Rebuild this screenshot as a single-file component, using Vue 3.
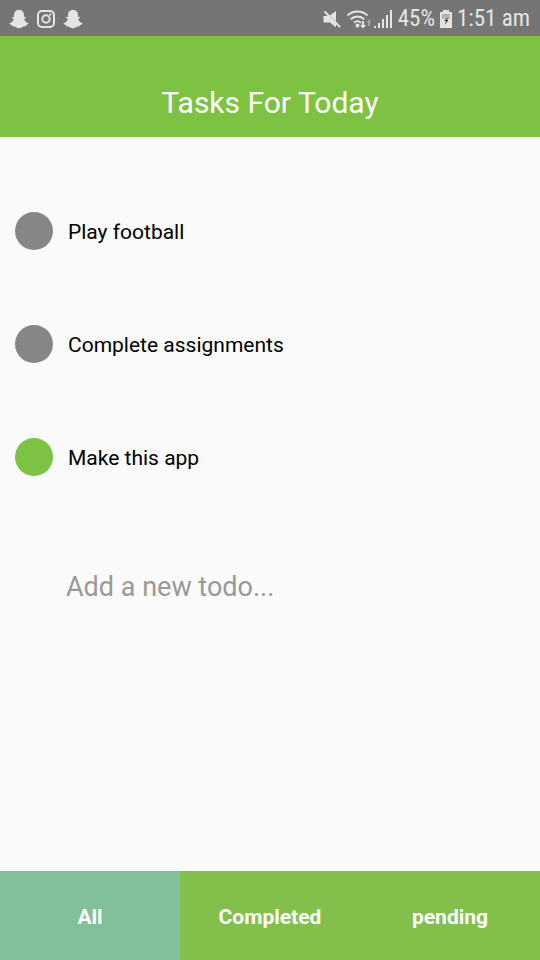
<script setup>
import { computed, ref } from 'vue'

const todos = ref([
  { id: 1, text: 'Play football', done: false },
  { id: 2, text: 'Complete assignments', done: false },
  { id: 3, text: 'Make this app', done: true },
])
const filters = ['All', 'Completed', 'pending']
const active = ref('All')
const draft = ref('')

const visible = computed(() =>
  todos.value.filter((t) => {
    if (active.value === 'Completed') return t.done
    if (active.value === 'pending') return !t.done
    return true
  })
)

function addTodo() {
  const text = draft.value.trim()
  if (!text) return
  todos.value.push({ id: Date.now(), text, done: false })
  draft.value = ''
}
</script>

<template>
  <div class="app">
    <div class="status">
      <div class="notifications">
        <svg class="ghost" viewBox="0 0 20 20">
          <path d="M10 1C7 1 5 3 5 6v2L3.400 7.800c-.8.600.1 1.700 1.400 2.300C4.300 12 3 13.400.6 14.200c-.3 1 1 1.400 2.200 1.700l.5 1.500c1.300-.2 2.500-.1 3.500.8 1.900 1.300 4.500 1.300 6.400 0 1-.9 2.200-1 3.500-.8l.5-1.500c1.200-.3 2.500-.7 2.200-1.700-2.400-.8-3.700-2.200-4.200-4.100 1.300-.6 2.200-1.700 1.400-2.300L15 8V6c0-3-2-5-5-5z" />
        </svg>
        <svg class="insta" viewBox="0 0 18 18">
          <rect x="1" y="1" width="16" height="16" rx="4" />
          <circle cx="9" cy="9" r="3.700" />
          <circle class="dot" cx="13.300" cy="4.700" r="1.100" />
        </svg>
        <svg class="ghost" viewBox="0 0 20 20">
          <path d="M10 1C7 1 5 3 5 6v2L3.400 7.800c-.8.600.1 1.700 1.400 2.300C4.300 12 3 13.400.6 14.200c-.3 1 1 1.400 2.200 1.700l.5 1.500c1.300-.2 2.500-.1 3.500.8 1.900 1.300 4.500 1.300 6.400 0 1-.9 2.200-1 3.500-.8l.5-1.500c1.200-.3 2.500-.7 2.200-1.700-2.400-.8-3.700-2.200-4.200-4.100 1.300-.6 2.200-1.700 1.400-2.300L15 8V6c0-3-2-5-5-5z" />
        </svg>
      </div>
      <div class="system">
        <svg class="mute" viewBox="0 0 18 18">
          <path d="M.5 6H5l8 8v3.500L7 12.500H.5zM7 5.200 13 1v10.200z" />
          <path class="slash" d="M1.500 1.500l15.500 15.500" />
        </svg>
        <div class="network">
          <svg class="wifi" viewBox="0 0 26 20">
            <path class="arc" d="M1.500 6.500c5.500-5.300 14.500-5.300 20 0M4.700 10.200c4-3.700 9.600-3.700 13.600 0M8 13.700c2-1.900 5-1.900 7 0" />
            <circle cx="11.500" cy="16.500" r="2" />
            <path d="M16 12h2v4h2l-3 3.500-3-3.500h2z" />
            <path class="faint" d="M22 17v-3.500h-1.500l2.500-3.500 2.500 3.500H24V17z" />
          </svg>
          <svg class="signal" viewBox="0 0 19 20">
            <path d="M0 17h2v2H0zM4 14h2v5H4zM8 10h2v9H8zM12 6h2v13h-2zM16 1h2v18h-2z" />
          </svg>
        </div>
        <span class="percent">45%</span>
        <svg class="battery" viewBox="0 0 12 18">
          <path d="M3 0h6v2h3v16H0V2h3z" />
          <path class="empty" d="M2 4h8v5H2z" />
          <path class="bolt" d="M8.500 7 4 11h2l-1.500 4 4-5H7z" />
        </svg>
        <span class="time">1:51 am</span>
      </div>
    </div>

    <header class="header">
      <h1>Tasks For Today</h1>
    </header>

    <main class="main">
      <ul class="list">
        <li v-for="todo in visible" :key="todo.id">
          <label class="todo">
            <input v-model="todo.done" type="checkbox" class="check" />
            <span class="text">{{ todo.text }}</span>
          </label>
        </li>
      </ul>
      <form class="add" @submit.prevent="addTodo">
        <input
          v-model="draft"
          type="text"
          class="field"
          placeholder="Add a new todo..."
          aria-label="Add a new todo..."
        />
      </form>
    </main>

    <nav class="tabs">
      <button
        v-for="f in filters"
        :key="f"
        type="button"
        class="tab"
        :class="{ active: active === f }"
        @click="active = f"
      >
        {{ f }}
      </button>
    </nav>
  </div>
</template>

<style>
body {
  margin: 0;
  background: #fafafa;
}
</style>

<style scoped>
.app {
  display: flex;
  flex-direction: column;
  min-height: 100vh;
  background: #fafafa;
  color: #000;
  font-family: Roboto, "Liberation Sans", sans-serif;
}
.status {
  display: flex;
  justify-content: space-between;
  align-items: center;
  padding: 2px 10px 0 9px;
  background: #757575;
  color: #e4e4e4;
}
.status svg {
  display: block;
  fill: #e4e4e4;
}
.notifications,
.system,
.network {
  display: flex;
  align-items: center;
}
.notifications {
  gap: 8px;
}
.system {
  gap: 5px;
}
.network {
  gap: 2px;
}
.ghost {
  width: 20px;
  height: 20px;
}
.status .insta {
  width: 18px;
  height: 18px;
  fill: none;
  stroke: #e4e4e4;
  stroke-width: 2;
}
.insta .dot {
  fill: #e4e4e4;
  stroke: none;
}
.mute {
  width: 18px;
  height: 18px;
}
.mute .slash {
  stroke: #e4e4e4;
  stroke-width: 2;
}
.wifi {
  width: 26px;
  height: 20px;
}
.status .arc {
  fill: none;
  stroke: #e4e4e4;
  stroke-width: 2;
}
.wifi .faint {
  fill: #a2a2a2;
}
.signal {
  width: 19px;
  height: 20px;
}
.battery {
  width: 12px;
  height: 18px;
}
.battery .empty {
  fill: #b4b4b4;
}
.battery .bolt {
  fill: #3c3c3c;
}
.percent,
.time {
  font-family: "Roboto Condensed", Roboto, "Liberation Sans", sans-serif;
  font-size: 23px;
  line-height: 34px;
  white-space: nowrap;
}
.header {
  padding: 47px 16px 14px;
  background: #7dc242;
  text-align: center;
}
.header h1 {
  margin: 0;
  color: #fff;
  font-size: 30px;
  font-weight: 400;
  line-height: 40px;
}
.main {
  flex: 1;
  padding-top: 38px;
}
.list {
  margin: 0;
  padding: 0;
  list-style: none;
}
.todo {
  display: flex;
  align-items: center;
  gap: 15px;
  height: 112px;
  padding: 0 15px 1px;
  font-size: 21px;
  line-height: 28px;
}
.text {
  padding-top: 2px;
}
.check {
  appearance: none;
  flex: none;
  width: 38px;
  height: 38px;
  margin: 0;
  border-radius: 50%;
  background: #868686;
}
.check:checked {
  background: #7dc242;
}
.add {
  padding: 49px 66px 48px;
}
.field {
  display: block;
  width: 100%;
  padding: 0;
  border: 0;
  outline: 0;
  background: transparent;
  color: #000;
  font-family: inherit;
  font-size: 27px;
  line-height: 48px;
  height: 48px;
}
.field::placeholder {
  color: #999;
  opacity: 1;
}
.tabs {
  display: grid;
  grid-template-columns: repeat(3, 1fr);
}
.tab {
  padding: 32px 8px 29px;
  border: 0;
  background: #82c04b;
  color: #fff;
  font-family: inherit;
  font-size: 21px;
  font-weight: 700;
  line-height: 28px;
}
.tab.active {
  background: #82c09a;
}
</style>
